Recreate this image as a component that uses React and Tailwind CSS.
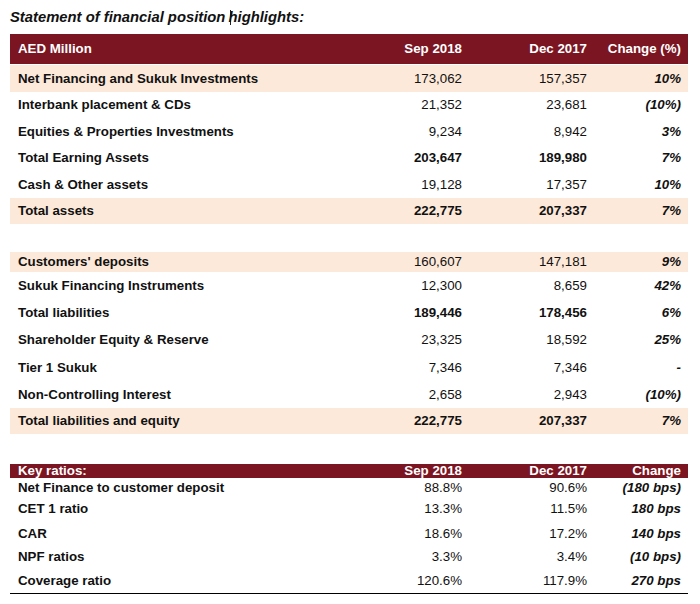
import React from "react";

const FONT = { fontFamily: '"Liberation Sans", Arial, Helvetica, sans-serif' };

function Row({ label, a, b, c, strong, rowClass }) {
  return (
    <div className={`flex items-center text-[13.3px] text-[#111] ${rowClass}`}>
      <div className="flex-1 pl-2 font-bold whitespace-nowrap">{label}</div>
      <div className={`w-[100px] text-right ${strong ? "font-bold" : ""}`}>{a}</div>
      <div className={`w-[125px] text-right ${strong ? "font-bold" : ""}`}>{b}</div>
      <div className="w-[94px] text-right font-bold italic">{c}</div>
      <div className="w-[7px]" />
    </div>
  );
}

function HeadRow({ label, a, b, c, rowClass }) {
  return (
    <div className={`flex items-center bg-[#7b1521] text-white text-[13.3px] font-bold ${rowClass}`}>
      <div className="flex-1 pl-2 whitespace-nowrap">{label}</div>
      <div className="w-[100px] text-right">{a}</div>
      <div className="w-[125px] text-right">{b}</div>
      <div className="w-[94px] text-right">{c}</div>
      <div className="w-[7px]" />
    </div>
  );
}

export default function App() {
  const peach = "bg-[#fde9d9]";
  return (
    <div className="w-[700px] h-[604px] bg-white overflow-hidden" style={FONT}>
      <div className="w-[678px] ml-[10px] leading-none">
        <div className="h-[34px] leading-[34px] text-[14.8px] font-bold italic text-[#111] whitespace-nowrap">
          Statement of financial position{" "}
          <span className="inline-block w-px h-[15px] bg-[#222] align-[-3px] -mr-[2px]" />
          highlights:
        </div>

        <HeadRow label="AED Million" a="Sep 2018" b="Dec 2017" c="Change (%)" rowClass="h-[30px] mb-px" />
        <Row label="Net Financing and Sukuk Investments" a="173,062" b="157,357" c="10%" rowClass={`h-[26.5px] ${peach}`} />
        <Row label="Interbank placement & CDs" a="21,352" b="23,681" c="(10%)" rowClass="h-[26.5px]" />
        <Row label="Equities & Properties Investments" a="9,234" b="8,942" c="3%" rowClass="h-[26.5px]" />
        <Row label="Total Earning Assets" a="203,647" b="189,980" c="7%" strong rowClass="h-[26.5px]" />
        <Row label="Cash & Other assets" a="19,128" b="17,357" c="10%" rowClass="h-[26.5px]" />
        <Row label="Total assets" a="222,775" b="207,337" c="7%" strong rowClass={`h-[26.5px] ${peach}`} />

        <div className="h-[28px]" />

        <Row label="Customers' deposits" a="160,607" b="147,181" c="9%" rowClass={`h-[20px] ${peach}`} />
        <Row label="Sukuk Financing Instruments" a="12,300" b="8,659" c="42%" rowClass="h-[27.2px]" />
        <Row label="Total liabilities" a="189,446" b="178,456" c="6%" strong rowClass="h-[27.2px]" />
        <Row label="Shareholder Equity & Reserve" a="23,325" b="18,592" c="25%" rowClass="h-[27.2px]" />
        <Row label="Tier 1 Sukuk" a="7,346" b="7,346" c="-" rowClass="h-[27.2px]" />
        <Row label="Non-Controlling Interest" a="2,658" b="2,943" c="(10%)" rowClass="h-[27.2px]" />
        <Row label="Total liabilities and equity" a="222,775" b="207,337" c="7%" strong rowClass={`h-[26px] ${peach}`} />

        <div className="h-[30px]" />

        <HeadRow label="Key ratios:" a="Sep 2018" b="Dec 2017" c="Change" rowClass="h-[14px]" />
        <Row label="Net Finance to customer deposit" a="88.8%" b="90.6%" c="(180 bps)" rowClass="h-[19px]" />
        <Row label="CET 1 ratio" a="13.3%" b="11.5%" c="180 bps" rowClass="h-[24px]" />
        <Row label="CAR" a="18.6%" b="17.2%" c="140 bps" rowClass="h-[25px]" />
        <Row label="NPF ratios" a="3.3%" b="3.4%" c="(10 bps)" rowClass="h-[22px]" />
        <Row label="Coverage ratio" a="120.6%" b="117.9%" c="270 bps" rowClass="h-[26px] border-b border-black" />
      </div>
    </div>
  );
}
